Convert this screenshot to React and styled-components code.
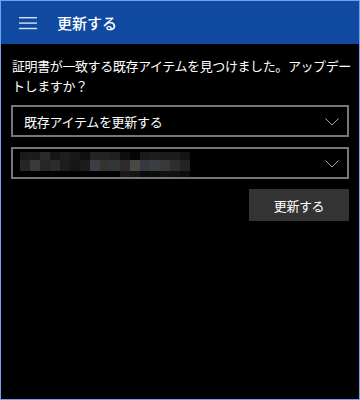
import React from 'react'
import styled, { createGlobalStyle } from 'styled-components'

const GlobalStyle = createGlobalStyle`
  html, body {
    margin: 0;
    padding: 0;
    background: #000;
  }
  body {
    font-family: 'Noto Sans CJK JP', 'Noto Sans', sans-serif;
  }
`

const mosaic = [
  ['#1a1a1a', '#1c1c1c', '#2a2a2a', '#161616', '#1e1e1e', '#181818', '#101010', '#20252a', '#252320', '#202020', '#0e0e0e', '#050505', '#1a1a1a', '#1e1c1c', '#1c1c1a', '#1a1c20', '#141414'],
  ['#252525', '#3a3a3a', '#262626', '#2c2c2c', '#1c1c1c', '#161616', '#1c1c1c', '#3a3e44', '#35332f', '#333638', '#302a2a', '#4a4842', '#35383c', '#3c3e44', '#3a3834', '#2e2e2e', '#252320'],
  [null, null, null, null, null, null, null, null, null, null, '#181a1e', '#141414', '#0a0a0a', '#0c0c0c', '#121212', '#101010', '#0c0c0c'],
]

const App = () => {
  return (
    <>
      <GlobalStyle />
      <Window>
        <Header>
          <Hamburger width='18' height='14' viewBox='0 0 18 14'>
            <rect x='0' y='1' width='18' height='1.4' fill='#d8e4f6' />
            <rect x='0' y='6.4' width='18' height='1.4' fill='#d8e4f6' />
            <rect x='0' y='11.8' width='18' height='1.4' fill='#d8e4f6' />
          </Hamburger>
          <Title>更新する</Title>
        </Header>
        <Body>
          <Message>
            証明書が一致する既存アイテムを見つけました。アップデー
            <br />
            トしますか？
          </Message>
          <Select>
            <SelectText>既存アイテムを更新する</SelectText>
            <Chevron />
          </Select>
          <Select>
            <Mosaic width='170' height='25' viewBox='0 0 170 25'>
              {mosaic.map((row, r) =>
                row.map((c, i) =>
                  c ? (
                    <rect
                      key={r + '-' + i}
                      x={i * 10}
                      y={r === 0 ? 0 : r === 1 ? 8 : 19}
                      width='10'
                      height={r === 0 ? 8 : r === 1 ? 11 : 6}
                      fill={c}
                    />
                  ) : null
                )
              )}
            </Mosaic>
            <Chevron />
          </Select>
          <Actions>
            <Button type='button'>更新する</Button>
          </Actions>
        </Body>
      </Window>
    </>
  )
}

const Chevron = () => (
  <ChevronSvg width='14' height='8' viewBox='0 0 14 8'>
    <polyline
      points='0.5,0.5 7,7 13.5,0.5'
      fill='none'
      stroke='#a8a8a8'
      strokeWidth='1'
    />
  </ChevronSvg>
)

const Window = styled.div`
  width: 360px;
  height: 400px;
  box-sizing: border-box;
  border: 1px solid #6fa1ee;
  background: #000;
  display: flex;
  flex-direction: column;
  overflow: hidden;
`

const Header = styled.header`
  height: 43px;
  flex-shrink: 0;
  background: #0f4aa0;
  display: flex;
  align-items: center;
  padding-left: 18px;
  gap: 20px;
`

const Hamburger = styled.svg`
  display: block;
  margin-top: 1px;
`

const Title = styled.h1`
  margin: 0;
  color: #fff;
  font-size: 15px;
  font-weight: 500;
  line-height: 20px;
`

const Body = styled.main`
  padding: 12px 10px 0 10px;
  display: flex;
  flex-direction: column;
  gap: 10px;
`

const Message = styled.p`
  margin: 0 0 -1px 1px;
  color: #fff;
  font-size: 13px;
  letter-spacing: -0.4px;
  line-height: 20px;
  white-space: nowrap;
`

const Select = styled.div`
  height: 32px;
  box-sizing: border-box;
  border: 2px solid #767676;
  display: flex;
  align-items: center;
  justify-content: space-between;
  padding: 0 8px 0 11px;
`

const SelectText = styled.span`
  color: #fff;
  font-size: 13px;
  letter-spacing: -0.3px;
`

const Mosaic = styled.svg`
  display: block;
  margin: 2px 0 0 -4px;
`

const ChevronSvg = styled.svg`
  display: block;
  margin-top: 2px;
`

const Actions = styled.div`
  display: flex;
  justify-content: flex-end;
`

const Button = styled.button`
  width: 100px;
  height: 32px;
  border: none;
  background: #333333;
  color: #fff;
  font-family: inherit;
  font-size: 13px;
  letter-spacing: -0.4px;
  padding: 0;
  cursor: pointer;
`

export default App
